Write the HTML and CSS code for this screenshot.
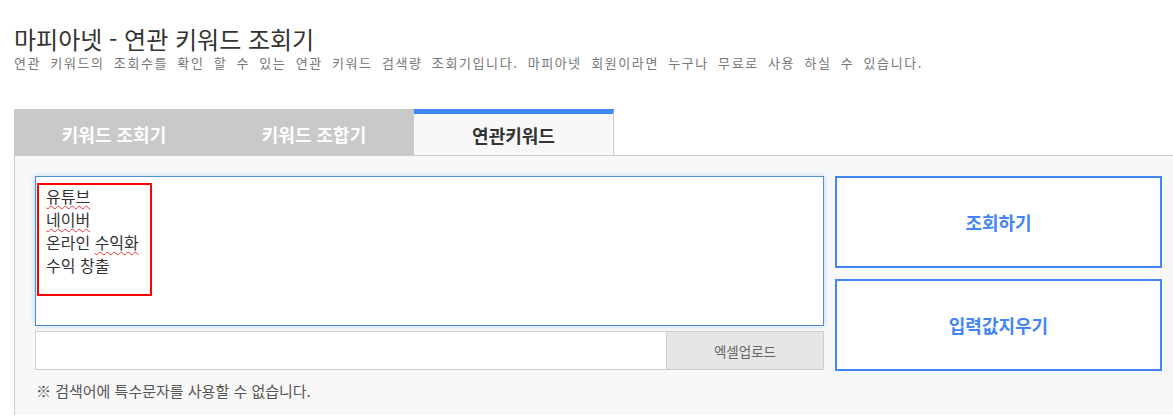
FILE: index.html
```html
<!DOCTYPE html>
<html lang="ko">
<head>
<meta charset="utf-8">
<title>마피아넷 - 연관 키워드 조회기</title>
<link rel="stylesheet" href="styles.css">
</head>
<body>
<div class="page">
  <header class="head">
    <h1 class="title">마피아넷 - 연관 키워드 조회기</h1>
    <p class="desc">연관 키워드의 조회수를 확인 할 수 있는 연관 키워드 검색량 조회기입니다. 마피아넷 회원이라면 누구나 무료로 사용 하실 수 있습니다.</p>
  </header>

  <nav class="tabs">
    <div class="tab">키워드 조회기</div>
    <div class="tab">키워드 조합기</div>
    <div class="tab active">연관키워드</div>
  </nav>

  <section class="panel">
    <div class="grid">
      <div class="left">
        <div class="area">
          <div class="line"><span class="spell">유튜브</span></div>
          <div class="line"><span class="spell">네이버</span></div>
          <div class="line">온라인 <span class="spell">수익화</span></div>
          <div class="line">수익 창출</div>
          <div class="mark"></div>
        </div>
        <div class="upload">
          <div class="file"></div>
          <div class="excel">엑셀업로드</div>
        </div>
      </div>
      <div class="right">
        <div class="btn">조회하기</div>
        <div class="btn">입력값지우기</div>
      </div>
    </div>
    <p class="note">※ 검색어에 특수문자를 사용할 수 없습니다.</p>
  </section>
</div>
</body>
</html>
```

FILE: styles.css
```css
html, body {
  margin: 0;
  padding: 0;
  background: #fff;
  overflow: hidden;
}
body {
  font-family: "Noto Sans CJK KR", "Noto Sans", sans-serif;
  color: #333;
}
.page {
  width: 1190px;
  padding: 0 0 0 14px;
}
.head {
  padding-top: 23px;
}
.title {
  margin: 0;
  font-size: 24px;
  font-weight: 400;
  line-height: 31px;
  color: #333;
}
.desc {
  margin: 0;
  font-size: 13px;
  line-height: 18px;
  color: #777;
  letter-spacing: 1.6px;
  word-spacing: 4px;
}
.tabs {
  display: flex;
  margin-top: 37px;
  width: 600px;
  background: #c9c9c9;
}
.tab {
  width: 200px;
  height: 46px;
  box-sizing: border-box;
  display: flex;
  align-items: center;
  justify-content: center;
  font-size: 18px;
  font-weight: 700;
  color: #fff;
  padding-top: 4px;
}
.tab.active {
  background: #f8f8f8;
  color: #333;
  border-top: 5px solid #4285f4;
  border-right: 1px solid #ccc;
  padding-top: 0;
}
.panel {
  background: #f8f8f8;
  border-top: 1px solid #ccc;
  border-left: 1px solid #ccc;
  padding: 20px 20px 14px 20px;
}
.grid {
  display: grid;
  grid-template-columns: 789px 327px;
  column-gap: 11px;
}
.left {
  display: flex;
  flex-direction: column;
  gap: 5px;
}
.area {
  position: relative;
  height: 150px;
  box-sizing: border-box;
  background: #fff;
  border: 1px solid #4f8dd0;
  box-shadow: 0 0 5px rgba(102, 175, 233, 0.45);
  padding: 8px 10px;
  font-size: 16px;
  line-height: 23px;
  color: #333;
}
.spell {
  text-decoration: underline wavy #e33;
  text-decoration-thickness: 1px;
  text-underline-offset: 2px;
}
.mark {
  position: absolute;
  left: 1px;
  top: 6px;
  width: 111px;
  height: 109px;
  border: 2px solid #f00;
}
.upload {
  display: flex;
  height: 39px;
}
.file {
  flex: 1;
  background: #fff;
  border: 1px solid #ccc;
  border-right: none;
}
.excel {
  width: 156px;
  display: flex;
  align-items: center;
  justify-content: center;
  background: #e6e6e6;
  border: 1px solid #ccc;
  font-size: 13.5px;
  color: #666;
}
.right {
  display: flex;
  flex-direction: column;
  gap: 11px;
}
.btn {
  height: 92px;
  box-sizing: border-box;
  border: 2px solid #4285f4;
  background: #fff;
  display: flex;
  align-items: center;
  justify-content: center;
  font-size: 18px;
  font-weight: 700;
  color: #4285f4;
}
.note {
  margin: 10px 0 0 1px;
  font-size: 15px;
  line-height: 20px;
  color: #555;
}
```
